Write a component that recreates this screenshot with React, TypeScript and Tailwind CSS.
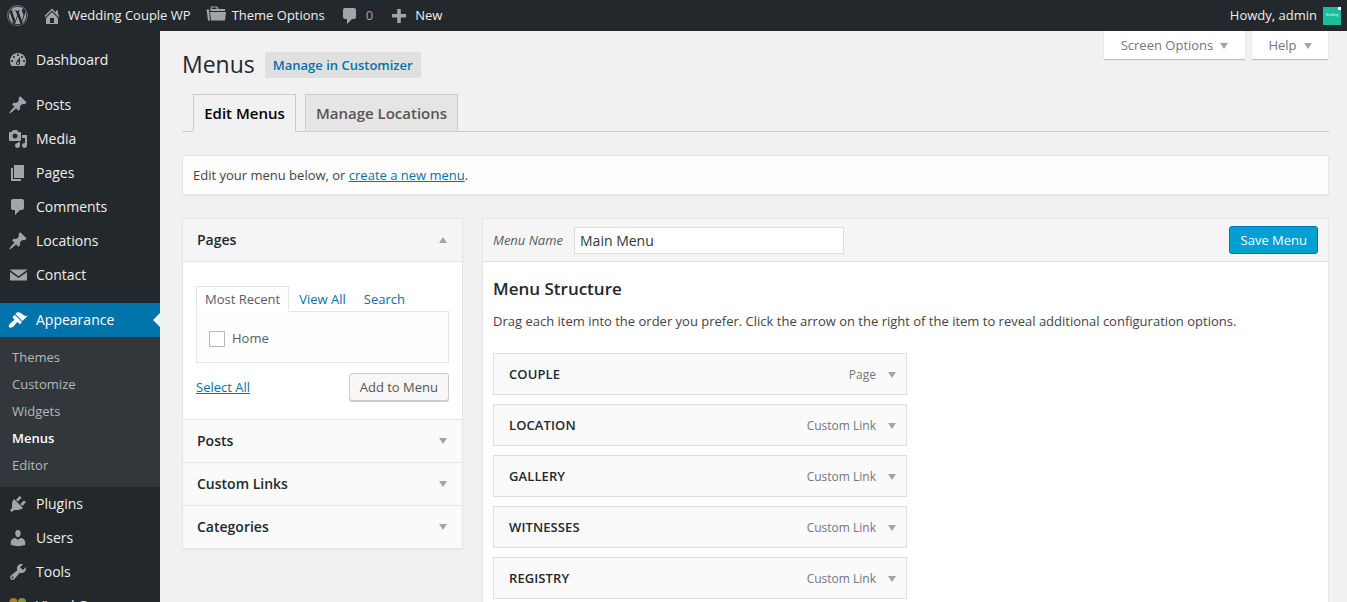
import { FaWordpress } from "react-icons/fa"

const paths: Record<string, string> = {
  dashboard: "M3.76 16h12.48c1.1-1.37 1.76-3.11 1.76-5 0-4.42-3.58-8-8-8s-8 3.58-8 8c0 1.89.66 3.63 1.76 5zM10 4c.55 0 1 .45 1 1s-.45 1-1 1-1-.45-1-1 .45-1 1-1zM6 6c.55 0 1 .45 1 1s-.45 1-1 1-1-.45-1-1 .45-1 1-1zm8 0c.55 0 1 .45 1 1s-.45 1-1 1-1-.45-1-1 .45-1 1-1zm-5.37 5.55L12 7v6c0 1.1-.9 2-2 2s-2-.9-2-2c0-.57.24-1.08.63-1.45zM4 10c.55 0 1 .45 1 1s-.45 1-1 1-1-.45-1-1 .45-1 1-1zm12 0c.55 0 1 .45 1 1s-.45 1-1 1-1-.45-1-1 .45-1 1-1zm-5 3c0-.55-.45-1-1-1s-1 .45-1 1 .45 1 1 1 1-.45 1-1z",
  pin: "M10.44 3.02l1.82-1.82 6.36 6.35-1.83 1.82c-1.05-.68-2.48-.57-3.41.36l-.75.75c-.92.93-1.04 2.35-.35 3.41l-1.83 1.82-2.41-2.41-2.8 2.79c-.42.42-3.38 2.71-3.8 2.29s1.86-3.39 2.28-3.81l2.79-2.79L4.1 9.36l1.83-1.82c1.05.69 2.48.57 3.4-.36l.75-.75c.93-.92 1.05-2.35.36-3.41z",
  media: "M13 11V4c0-.55-.45-1-1-1h-1.67L9 1H5L3.67 3H2c-.55 0-1 .45-1 1v7c0 .55.45 1 1 1h10c.55 0 1-.45 1-1zM7 4.5c1.38 0 2.5 1.12 2.5 2.5S8.38 9.5 7 9.5 4.5 8.38 4.5 7 5.62 4.5 7 4.5zM14 6h5v10.5c0 1.38-1.12 2.5-2.5 2.5S14 17.88 14 16.5s1.12-2.5 2.5-2.5c.17 0 .34.02.5.05V9h-3V6zm-4 8.05V13h2v3.5c0 1.38-1.12 2.5-2.5 2.5S7 17.88 7 16.5 8.12 14 9.5 14c.17 0 .34.02.5.05z",
  page: "M6 15V2h10v13H6zm-1 1h8v2H3V5h2v11z",
  comment: "M5 2h9c1.1 0 2 .9 2 2v7c0 1.1-.9 2-2 2h-2l-5 5v-5H5c-1.1 0-2-.9-2-2V4c0-1.1.9-2 2-2z",
  email: "M2 4.5h17v.6l-8.5 6.1L2 5.1zM2 7l8.5 6L19 7v8.5H2z",
  brush: "M14.48 11.06L7.41 3.99l1.5-1.5c.5-.56 2.3-.47 3.51.32 1.21.8 1.43 1.28 2.91 2.1 1.18.64 2.45 1.26 4.45.85zm-.71.71L6.7 4.7 4.93 6.47c-.39.39-.39 1.02 0 1.41l1.06 1.06c.39.39.39 1.03 0 1.42-.6.6-1.43 1.11-2.21 1.69-.35.26-.7.53-1.01.84C1.43 13.71 0 16.02 1.29 17.3c1.29 1.29 3.59-.13 4.95-1.49.31-.31.58-.66.84-1.01.58-.78 1.09-1.61 1.69-2.21.39-.39 1.02-.39 1.41 0l1.06 1.06c.39.39 1.02.39 1.41 0z",
  plugin: "M13.11 4.36L9.87 7.6 8 5.73l3.24-3.24c.35-.34 1.05-.2 1.56.32.52.51.66 1.21.31 1.55zm-8 1.77l.91-1.12 9.01 9.01-1.19.84c-.71.71-2.63 1.16-3.82 1.16H6.14L4.9 17.26c-.59.59-1.54.59-2.12 0-.59-.58-.59-1.53 0-2.12l1.24-1.24v-3.88c0-1.13.4-3.19 1.09-3.89zm7.26 3.97l3.24-3.24c.34-.35 1.04-.21 1.55.31.52.51.66 1.21.31 1.55l-3.24 3.25z",
  user: "M10 9.25c-2.27 0-2.73-3.44-2.73-3.44C7 4.02 7.82 2 9.97 2c2.16 0 2.98 2.02 2.71 3.81 0 0-.41 3.44-2.68 3.44zm0 2.57L12.72 10c2.39 0 4.52 2.33 4.52 4.53v2.49s-3.65 1.13-7.24 1.13c-3.65 0-7.24-1.13-7.24-1.13v-2.49c0-2.25 1.94-4.48 4.47-4.48z",
  tools: "M16.68 9.77c-1.34 1.34-3.3 1.67-4.95.99l-5.41 6.52c-.99.99-2.59.99-3.58 0s-.99-2.59 0-3.57l6.52-5.42c-.68-1.65-.35-3.61.99-4.95 1.28-1.28 3.12-1.62 4.72-1.06l-2.89 2.89 2.82 2.82 2.86-2.87c.53 1.58.18 3.39-1.08 4.65zM3.81 16.21c.4.39 1.04.39 1.43 0 .4-.4.4-1.04 0-1.43-.39-.4-1.03-.4-1.43 0-.39.39-.39 1.03 0 1.43z",
  home: "M16 8.5l1.53 1.53-1.06 1.06L10 4.62l-6.47 6.47-1.06-1.06L10 2.5l4 4v-2h2v4zm-6-2.46l6 5.99V18H4v-5.97zM12 17v-5H8v5h4z",
  folder: "M4.5 3l.5-2.5h6.5l1 2.5h6.5v2H4.5zM6 1.5L5.7 3h5.2l-.5-1.5zM4 6h16l-1 8.5H5zM.5 3.5H3l1 11H2z",
  plus: "M17 8v3.5h-5.2V17H8.2v-5.5H3V8h5.2V3h3.6v5z",
}

function Icon({ name, className }: { name: string; className?: string }) {
  return (
    <svg viewBox="0 0 20 20" fill="currentColor" className={className}>
      <path fillRule="evenodd" d={paths[name]} />
    </svg>
  )
}

function Down({ className = "" }: { className?: string }) {
  return <span className={`w-0 h-0 border-x-[4px] border-x-transparent border-t-[6px] border-t-[#a0a5aa] ${className}`} />
}

function MenuItem({ icon, label, active }: { icon: string; label: string; active?: boolean }) {
  return (
    <div className={`relative flex h-[34px] items-center text-[14px] text-[#eee] ${active ? "bg-[#0073aa] text-white" : ""}`}>
      <Icon name={icon} className={`ml-[8px] size-[20px] ${active ? "text-white" : "text-[#a0a5aa]"}`} />
      <span className="ml-[8px] pb-[2px]">{label}</span>
      {active && <span className="absolute right-0 top-[10px] w-0 h-0 border-y-[7px] border-y-transparent border-r-[7px] border-r-[#f1f1f1]" />}
    </div>
  )
}

function Sidebar() {
  return (
    <aside className="w-[160px] shrink-0 bg-[#23282d] pt-[12px]">
      <MenuItem icon="dashboard" label="Dashboard" />
      <div className="h-[11px]" />
      <MenuItem icon="pin" label="Posts" />
      <MenuItem icon="media" label="Media" />
      <MenuItem icon="page" label="Pages" />
      <MenuItem icon="comment" label="Comments" />
      <MenuItem icon="pin" label="Locations" />
      <MenuItem icon="email" label="Contact" />
      <div className="h-[11px]" />
      <MenuItem icon="brush" label="Appearance" active />
      <div className="bg-[#32373c] pt-[7px] pb-[8px] text-[13px] text-[#b4b9be]">
        {["Themes", "Customize", "Widgets", "Menus", "Editor"].map((s) => (
          <div key={s} className={`flex h-[27px] items-center pl-[12px] ${s === "Menus" ? "font-semibold text-white" : ""}`}>
            {s}
          </div>
        ))}
      </div>
      <MenuItem icon="plugin" label="Plugins" />
      <MenuItem icon="user" label="Users" />
      <MenuItem icon="tools" label="Tools" />
      <div className="flex h-[34px] items-center text-[14px] text-[#eee]">
        <svg viewBox="0 0 20 20" className="ml-[8px] size-[20px]">
          <circle cx="5.5" cy="6" r="4" fill="#b07a1e" />
          <circle cx="14" cy="6" r="4" fill="#7d9a35" />
        </svg>
        <span className="ml-[8px] pb-[2px]">Visual Composer</span>
      </div>
    </aside>
  )
}

function TopBar() {
  return (
    <header className="flex h-[31px] shrink-0 items-center bg-[#23282d] text-[13px] text-[#eee]">
      <FaWordpress className="ml-[7px] size-[21px] text-[#a0a5aa]" />
      <Icon name="home" className="ml-[14px] size-[20px] text-[#a0a5aa]" />
      <span className="ml-[6px]">Wedding Couple WP</span>
      <Icon name="folder" className="ml-[15px] size-[20px] text-[#a0a5aa]" />
      <span className="ml-[6px]">Theme Options</span>
      <Icon name="comment" className="ml-[15px] size-[20px] text-[#a0a5aa]" />
      <span className="ml-[6px] text-[#a0a5aa]">0</span>
      <Icon name="plus" className="ml-[16px] size-[20px] text-[#a0a5aa]" />
      <span className="ml-[6px]">New</span>
      <span className="ml-auto">Howdy, admin</span>
      <div className="relative ml-[6px] mr-[6px] flex size-[18px] items-center justify-center overflow-hidden bg-[#1abc9c] text-[3px] text-white">
        <span>Wedding</span>
        <span className="absolute right-0 top-0 size-[3px] bg-white" />
      </div>
    </header>
  )
}

function PanelRow({ label, up }: { label: string; up?: boolean }) {
  return (
    <div className={`flex h-[43px] items-center justify-between px-[14px] text-[14px] font-semibold text-[#23282d] ${up ? "border-b border-[#e5e5e5] bg-[#f5f5f5]" : "border-t border-[#e5e5e5] bg-[#fafafa]"}`}>
      <span className="pb-[2px]">{label}</span>
      {up ? (
        <span className="mr-[1px] w-0 h-0 border-x-[4px] border-x-transparent border-b-[6px] border-b-[#a0a5aa]" />
      ) : (
        <Down className="mr-[1px]" />
      )}
    </div>
  )
}

function PagesPanel() {
  return (
    <div className="w-[281px] shrink-0 self-start border border-[#e5e5e5] bg-white shadow-[0_1px_1px_rgba(0,0,0,0.04)]">
      <PanelRow label="Pages" up />
      <div className="px-[13px] pt-[24px] pb-[18px] text-[13px]">
        <div className="flex h-[25px] items-end">
          <div className="relative z-10 -mb-px flex h-[26px] items-center border border-[#e5e5e5] border-b-white bg-white px-[8px] pt-[2px] text-[#555d66]">Most Recent</div>
          <span className="ml-[10px] pb-[2px] text-[#0073aa]">View All</span>
          <span className="ml-[18px] pb-[2px] text-[#0073aa]">Search</span>
        </div>
        <div className="flex h-[52px] items-center border border-[#e5e5e5] bg-[#fdfdfd] pl-[12px] pt-[4px] text-[#555d66]">
          <span className="size-[16px] border border-[#b4b9be] bg-white" />
          <span className="ml-[7px]">Home</span>
        </div>
        <div className="mt-[10px] flex items-center justify-between">
          <span className="pt-[2px] text-[#0073aa] underline">Select All</span>
          <span className="flex h-[28px] items-center rounded-[3px] border border-[#ccc] bg-[#f7f7f7] px-[10px] pt-[2px] text-[#555] shadow-[0_1px_0_#ccc]">Add to Menu</span>
        </div>
      </div>
      <PanelRow label="Posts" />
      <PanelRow label="Custom Links" />
      <PanelRow label="Categories" />
    </div>
  )
}

function MenuRow({ label, type }: { label: string; type: string }) {
  return (
    <div className="flex h-[42px] w-[414px] shrink-0 items-center border border-[#dfdfdf] bg-[#fafafa] pl-[15px] pr-[10px] pt-[1px]">
      <span className="text-[13px] font-semibold tracking-[0.1px] text-[#23282d]">{label}</span>
      <span className="ml-auto text-[12px] text-[#72777c]">{type}</span>
      <Down className="ml-[12px]" />
    </div>
  )
}

function MenuEditor() {
  return (
    <div className="min-w-0 flex-1 border border-[#e5e5e5] bg-white shadow-[0_1px_1px_rgba(0,0,0,0.04)]">
      <div className="flex h-[43px] items-center border-b border-[#dfdfdf] bg-[#f5f5f5] pl-[10px] pr-[10px]">
        <span className="pt-[2px] text-[13px] italic text-[#555d66]">Menu Name</span>
        <div className="ml-[11px] flex h-[27px] w-[270px] items-center border border-[#ddd] bg-white pl-[5px] text-[14px] text-[#32373c]">Main Menu</div>
        <span className="ml-auto flex h-[28px] items-center rounded-[3px] border border-[#0073aa] bg-[#00a0d2] pl-[11px] pr-[10px] pt-[2px] text-[13px] text-white">Save Menu</span>
      </div>
      <div className="px-[10px] pt-[16px] pb-[40px]">
        <h3 className="text-[17px] leading-[22px] font-semibold text-[#23282d]">Menu Structure</h3>
        <p className="mt-[11px] text-[13px] leading-[20px] text-[#444]">
          Drag each item into the order you prefer. Click the arrow on the right of the item to reveal additional configuration options.
        </p>
        <div className="mt-[22px] flex flex-col gap-[9px]">
          <MenuRow label="COUPLE" type="Page" />
          <MenuRow label="LOCATION" type="Custom Link" />
          <MenuRow label="GALLERY" type="Custom Link" />
          <MenuRow label="WITNESSES" type="Custom Link" />
          <MenuRow label="REGISTRY" type="Custom Link" />
        </div>
      </div>
    </div>
  )
}

function Content() {
  return (
    <main className="min-w-0 flex-1 bg-[#f1f1f1] pl-[22px] pr-[18px] text-[13px] text-[#444]">
      <div className="flex h-[64px] items-start justify-between">
        <div className="flex items-center pt-[21px]">
          <h1 className="pb-[2px] text-[23px] leading-[24px] text-[#23282d]">Menus</h1>
          <span className="ml-[10px] flex h-[26px] items-center rounded-[2px] bg-[#e0e0e0] px-[8px] pt-[1px] text-[13px] font-semibold text-[#0073aa]">Manage in Customizer</span>
        </div>
        <div className="flex gap-[7px] pr-[1px]">
          <span className="flex h-[28px] w-[141px] items-center justify-center gap-[7px] bg-white pt-[2px] text-[#72777c] shadow-[0_1px_1px_rgba(0,0,0,0.2)]">Screen Options <Down /></span>
          <span className="flex h-[28px] w-[76px] items-center justify-center gap-[7px] bg-white pt-[2px] text-[#72777c] shadow-[0_1px_1px_rgba(0,0,0,0.2)]">Help <Down /></span>
        </div>
      </div>
      <div className="flex h-[37px] items-end gap-[9px] border-b border-[#ccc] pl-[11px]">
        <div className="-mb-px flex h-[38px] w-[103px] items-center justify-center border border-[#ccc] border-b-[#f1f1f1] bg-[#f1f1f1] text-[15px] font-semibold text-[#000]">Edit Menus</div>
        <div className="-mb-px flex h-[38px] w-[153px] items-center justify-center border border-[#ccc] bg-[#e5e5e5] text-[15px] font-semibold text-[#555]">Manage Locations</div>
      </div>
      <div className="mt-[23px] flex h-[40px] items-center border border-[#e5e5e5] bg-[#fdfdfd] pl-[10px] pt-[1px] shadow-[0_1px_1px_rgba(0,0,0,0.04)]">
        <span>Edit your menu below, or <span className="text-[#0073aa] underline">create a new menu</span>.</span>
      </div>
      <div className="mt-[23px] flex items-start gap-[19px]">
        <PagesPanel />
        <MenuEditor />
      </div>
    </main>
  )
}

export default function App() {
  return (
    <div className="flex h-screen flex-col overflow-hidden font-['Open_Sans',sans-serif]">
      <TopBar />
      <div className="flex min-h-0 flex-1">
        <Sidebar />
        <Content />
      </div>
    </div>
  )
}
